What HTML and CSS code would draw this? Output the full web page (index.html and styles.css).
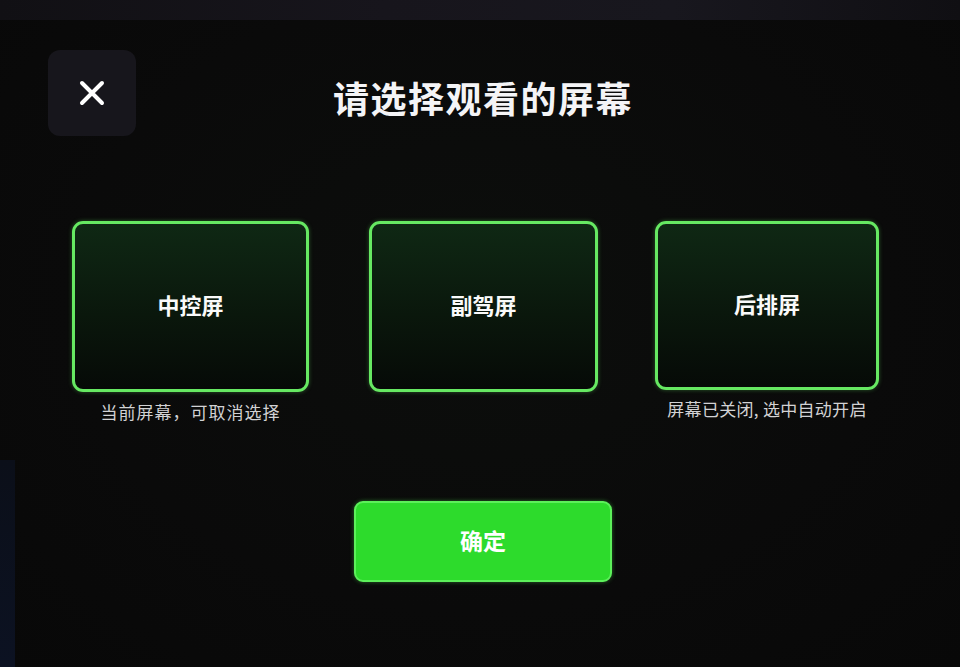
FILE: index.html
```html
<!DOCTYPE html>
<html lang="zh">
<head>
<meta charset="utf-8">
<link rel="stylesheet" href="styles.css">
</head>
<body>
<div class="screen">
  <div class="top-strip"></div>
  <div class="side-glow"></div>
  <header class="header">
    <button class="close" aria-label="关闭">
      <svg width="28" height="28" viewBox="0 0 28 28"><path d="M4 4 L24 24 M24 4 L4 24" stroke="#fff" stroke-width="4" stroke-linecap="round"/></svg>
    </button>
    <h1 class="title">请选择观看的屏幕</h1>
    <div></div>
  </header>
  <section class="cards">
    <div class="col col1">
      <div class="card"><span>中控屏</span></div>
      <p class="caption">当前屏幕，可取消选择</p>
    </div>
    <div class="col col2">
      <div class="card"><span>副驾屏</span></div>
      <p class="caption"></p>
    </div>
    <div class="col col3">
      <div class="card short"><span>后排屏</span></div>
      <p class="caption narrow">屏幕已关闭, 选中自动开启</p>
    </div>
  </section>
  <div class="actions">
    <button class="confirm">确定</button>
  </div>
</div>
</body>
</html>
```
FILE: styles.css
```css
html, body {
  margin: 0;
  padding: 0;
  background: #0a0a0b;
}
.screen {
  position: relative;
  width: 960px;
  height: 667px;
  overflow: hidden;
  background: radial-gradient(ellipse at 50% 45%, #0c0e0c 0%, #0a0a0a 60%, #080808 100%);
  font-family: "Noto Sans CJK SC", "Noto Sans", sans-serif;
  color: #fff;
  display: flex;
  flex-direction: column;
}
.top-strip {
  height: 20px;
  background: linear-gradient(90deg, #111014 0%, #17151c 40%, #18171e 70%, #100f13 100%);
  flex: none;
}
.side-glow {
  position: absolute;
  left: 0;
  top: 460px;
  width: 15px;
  height: 207px;
  background: linear-gradient(180deg, #0b0f19, #0c1222);
}
.header {
  display: grid;
  grid-template-columns: 136px 1fr 136px;
  align-items: center;
  margin-top: 30px;
  height: 86px;
}
.close {
  margin-left: 48px;
  width: 88px;
  height: 86px;
  border: none;
  border-radius: 12px;
  background: #17161c;
  display: flex;
  align-items: center;
  justify-content: center;
  padding: 0;
}
.title {
  margin: 8px 0 0;
  text-align: center;
  font-size: 36px;
  font-weight: 700;
  letter-spacing: 1.5px;
  padding-left: 6px;
  color: #f4f4f6;
}
.cards {
  display: flex;
  padding-left: 72px;
  margin-top: 85px;
}
.col {
  display: flex;
  flex-direction: column;
  align-items: center;
}
.col1 { width: 237px; }
.col2 { width: 229px; margin-left: 60px; }
.col3 { width: 224px; margin-left: 57px; }
.card {
  box-sizing: border-box;
  width: 100%;
  height: 171px;
  border: 3px solid #66e862;
  border-radius: 11px;
  background: linear-gradient(180deg, #0f2814 0%, #0a170c 55%, #060a07 100%);
  display: flex;
  align-items: center;
  justify-content: center;
  box-shadow: 0 0 4px rgba(100, 230, 95, 0.35);
}
.card.short { height: 169px; }
.card span {
  font-size: 22px;
  font-weight: 700;
  color: #fafafa;
  margin-top: -6px;
}
.caption {
  margin: 9px 0 0;
  height: 22px;
  font-size: 17px;
  line-height: 22px;
  color: #d2d2d4;
  letter-spacing: 1px;
}
.caption.narrow {
  letter-spacing: 0.3px;
  margin-top: 8px;
}
.actions {
  display: flex;
  padding-left: 354px;
  margin-top: 78px;
}
.confirm {
  width: 258px;
  height: 81px;
  border: 2px solid #5cf05a;
  border-radius: 9px;
  background: #2ddb2c;
  color: #fff;
  font-family: "Noto Sans CJK SC", sans-serif;
  font-size: 23px;
  font-weight: 700;
  padding: 0 0 4px;
  box-shadow: 0 0 4px rgba(80, 240, 80, 0.4);
}
```
